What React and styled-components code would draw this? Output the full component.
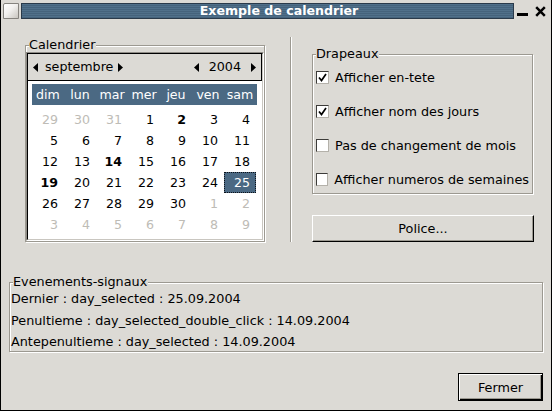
import React from "react";
import styled, { createGlobalStyle } from "styled-components";

const GlobalStyle = createGlobalStyle`
  html, body {
    margin: 0;
    padding: 0;
    background: #dcdad5;
  }
`;

const FONT = `"DejaVu Sans", "Liberation Sans", sans-serif`;

const DAY_NAMES = ["dim", "lun", "mar", "mer", "jeu", "ven", "sam"];

// o = other month, b = marked (bold), s = selected
const WEEKS = [
  [[29, "o"], [30, "o"], [31, "o"], [1], [2, "b"], [3], [4]],
  [[5], [6], [7], [8], [9], [10], [11]],
  [[12], [13], [14, "b"], [15], [16], [17], [18]],
  [[19, "b"], [20], [21], [22], [23], [24], [25, "s"]],
  [[26], [27], [28], [29], [30], [1, "o"], [2, "o"]],
  [[3, "o"], [4, "o"], [5, "o"], [6, "o"], [7, "o"], [8, "o"], [9, "o"]],
];

const FLAGS = [
  { label: "Afficher en-tete", checked: true },
  { label: "Afficher nom des jours", checked: true },
  { label: "Pas de changement de mois", checked: false },
  { label: "Afficher numeros de semaines", checked: false },
];

const EVENTS = [
  "Dernier : day_selected : 25.09.2004",
  "Penultieme : day_selected_double_click : 14.09.2004",
  "Antepenultieme : day_selected : 14.09.2004",
];

const Arrow = ({ dir }) => (
  <svg width="5" height="9" viewBox="0 0 5 9">
    <polygon points={dir === "left" ? "5,0 0,4.5 5,9" : "0,0 5,4.5 0,9"} fill="#000" />
  </svg>
);

const CheckMark = () => (
  <svg width="11" height="11" viewBox="0 0 11 11">
    <polyline points="2,5.5 4.5,8.5 9,2" fill="none" stroke="#000" strokeWidth="1.7" />
  </svg>
);

const App = () => {
  return (
    <>
      <GlobalStyle />
      <Window>
        <TitleBar>
          <CloseBox />
          <TitleStrip>Exemple de calendrier</TitleStrip>
          <WinControls>
            <svg width="11" height="12" viewBox="0 0 11 12">
              <rect x="0" y="7" width="11" height="3" fill="#000" />
            </svg>
            <svg width="11" height="11" viewBox="0 0 11 11">
              <path d="M1.2 1.2 L9.8 9.8 M9.8 1.2 L1.2 9.8" stroke="#000" strokeWidth="2.5" />
            </svg>
          </WinControls>
        </TitleBar>

        <Body>
          <TopRow>
            <Frame $width={240} $top={1}>
              <Legend>Calendrier</Legend>
              <Calendar>
                <CalendarInner>
                  <CalHeader>
                    <Spinner $gap={7} $gap2={5}>
                      <Arrow dir="left" />
                      <span>septembre</span>
                      <Arrow dir="right" />
                    </Spinner>
                    <Spinner $gap={10} $gap2={10}>
                      <Arrow dir="left" />
                      <span>2004</span>
                      <Arrow dir="right" />
                    </Spinner>
                  </CalHeader>
                  <CalBody>
                    <DayNames>
                      {DAY_NAMES.map((d) => (
                        <DayName key={d}>{d}</DayName>
                      ))}
                    </DayNames>
                    <DayGrid>
                      {WEEKS.flat().map(([n, kind], i) => (
                        <DayCell
                          key={i}
                          $other={kind === "o"}
                          $bold={kind === "b"}
                          $selected={kind === "s"}
                        >
                          {n}
                        </DayCell>
                      ))}
                    </DayGrid>
                  </CalBody>
                </CalendarInner>
              </Calendar>
            </Frame>

            <VSeparator />

            <RightCol>
              <Frame $width={221}>
                <Legend>Drapeaux</Legend>
                <FlagList>
                  {FLAGS.map((f) => (
                    <FlagRow key={f.label}>
                      <CheckBox>{f.checked && <CheckMark />}</CheckBox>
                      {f.label}
                    </FlagRow>
                  ))}
                </FlagList>
              </Frame>
              <PushButton $width={222} $height={27} $top={21}>
                Police...
              </PushButton>
            </RightCol>
          </TopRow>

          <Frame $width={534} $top={32}>
            <Legend>Evenements-signaux</Legend>
            <EventList>
              {EVENTS.map((e) => (
                <EventLine key={e}>{e}</EventLine>
              ))}
            </EventList>
          </Frame>

          <Footer>
            <PushButton $width={85} $height={28} $default>
              Fermer
            </PushButton>
          </Footer>
        </Body>
      </Window>
    </>
  );
};

// Styled Components

const Window = styled.div`
  width: 552px;
  height: 411px;
  box-sizing: border-box;
  border: 1px solid #000;
  border-top: 0;
  background: #dcdad5;
  display: flex;
  flex-direction: column;
  font-family: ${FONT};
  font-size: 12.8px;
  color: #000;
`;

const TitleBar = styled.div`
  height: 20px;
  box-sizing: border-box;
  padding: 3px 0 0 2px;
  display: flex;
  align-items: flex-start;
`;

const CloseBox = styled.div`
  width: 16px;
  height: 16px;
  box-sizing: border-box;
  border: 1px solid #85837e;
  border-radius: 2px 0 0 0;
  background: linear-gradient(135deg, #ffffff 0%, #f1f0ee 45%, #c9c6c0 100%);
`;

const TitleStrip = styled.div`
  margin-left: 2px;
  width: 493px;
  height: 16px;
  box-sizing: border-box;
  border: 1px solid #2a3a4a;
  padding-left: 23px;
  background: repeating-linear-gradient(
    to bottom,
    #50708a 0px,
    #50708a 1px,
    #45637c 1px,
    #45637c 2px
  );
  color: #fff;
  font-weight: bold;
  font-size: 12.6px;
  line-height: 14px;
  text-align: center;
  white-space: nowrap;
`;

const WinControls = styled.div`
  margin-left: 3px;
  display: flex;
  align-items: flex-start;
  gap: 7px;
  padding-top: 3px;

  & > svg:last-child {
    margin-top: 0;
  }
`;

const Body = styled.div`
  flex: 1;
  padding: 17px 8px 0 8px;
  display: flex;
  flex-direction: column;
`;

const TopRow = styled.div`
  display: flex;
  margin-left: 16px;
  height: 206px;
`;

const Frame = styled.fieldset`
  width: ${(p) => p.$width}px;
  box-sizing: border-box;
  margin: ${(p) => p.$top || 0}px 0 0 0;
  padding: 0;
  border: 1px solid #9c9991;
  box-shadow: inset 1px 1px 0 #fff, 1px 1px 0 #fff;
  min-width: 0;
  align-self: flex-start;
`;

const Legend = styled.legend`
  padding: 0 1px 0 0;
  margin-left: 3px;
  line-height: 14px;
  height: 14px;
  background: #dcdad5;
  font-size: 12.8px;
`;

const Calendar = styled.div`
  width: 238px;
  height: 189px;
  box-sizing: border-box;
  border: 1px solid;
  border-color: #8f8c86 #ffffff #ffffff #8f8c86;
  font-size: 12.6px;
`;

const CalendarInner = styled.div`
  height: 100%;
  box-sizing: border-box;
  border: 1px solid;
  border-color: #000 #c9c6c0 #c9c6c0 #000;
  background: #fff;
  display: flex;
  flex-direction: column;
`;

const CalHeader = styled.div`
  height: 27px;
  box-sizing: border-box;
  border-right: 1px solid #000;
  border-bottom: 1px solid #000;
  background: #dcdad5;
  display: flex;
  align-items: center;
  justify-content: space-between;
  padding: 0 5px;
  font-size: 12.7px;
`;

const Spinner = styled.div`
  display: flex;
  align-items: center;

  & > span {
    margin: 0 ${(p) => p.$gap2}px 0 ${(p) => p.$gap}px;
    line-height: 14px;
  }
`;

const CalBody = styled.div`
  padding: 3px 4px 4px 4px;
`;

const DayNames = styled.div`
  width: 225px;
  height: 21px;
  background: #4b6983;
  display: grid;
  grid-template-columns: repeat(7, 32px);
  align-items: center;
  color: #fff;
`;

const DayName = styled.div`
  text-align: center;
  line-height: 21px;
`;

const DayGrid = styled.div`
  margin-top: 4px;
  display: grid;
  grid-template-columns: repeat(7, 32px);
  grid-auto-rows: 21px;
`;

const DayCell = styled.div`
  box-sizing: border-box;
  text-align: right;
  padding-right: 6px;
  line-height: 21px;
  font-weight: ${(p) => (p.$bold ? "bold" : "normal")};
  color: ${(p) => (p.$other ? "#bebcb6" : p.$selected ? "#fff" : "#000")};
  background: ${(p) => (p.$selected ? "#4b6983" : "transparent")};
  outline: ${(p) => (p.$selected ? "1px dotted #0c1118" : "none")};
  outline-offset: -1px;
`;

const VSeparator = styled.div`
  margin-left: 25px;
  width: 2px;
  height: 205px;
  box-sizing: border-box;
  border-left: 1px solid #9c9991;
  border-right: 1px solid #fff;
`;

const RightCol = styled.div`
  margin-left: 20px;
  padding-top: 10px;
  display: flex;
  flex-direction: column;
`;

const FlagList = styled.div`
  padding: 6px 3px 4px 3px;
  display: flex;
  flex-direction: column;
  gap: 14px;
`;

const FlagRow = styled.div`
  height: 20px;
  display: flex;
  align-items: center;
  gap: 6px;
  white-space: nowrap;
`;

const CheckBox = styled.div`
  width: 13px;
  height: 13px;
  box-sizing: border-box;
  border: 1px solid;
  border-color: #3c3b39 #b4b1aa #b4b1aa #3c3b39;
  background: #fff;
  display: flex;
  align-items: center;
  justify-content: center;
`;

const PushButton = styled.button`
  width: ${(p) => p.$width}px;
  height: ${(p) => p.$height}px;
  margin-top: ${(p) => p.$top || 0}px;
  box-sizing: border-box;
  padding: 0;
  font-family: ${FONT};
  font-size: 12.8px;
  color: #000;
  background: #dcdad5;
  border: 1px solid;
  border-color: ${(p) => (p.$default ? "#000" : "#fff #000 #000 #fff")};
  box-shadow: ${(p) =>
    p.$default
      ? "inset 1px 1px 0 #fff, inset -1px -1px 0 #000, inset -2px -2px 0 #9c9991"
      : "inset -1px -1px 0 #9c9991"};
`;

const EventList = styled.div`
  padding: 1px 1px 0 1px;
  display: flex;
  flex-direction: column;
  gap: 3.7px;
`;

const EventLine = styled.div`
  line-height: 18px;
  height: 18px;
  white-space: nowrap;
`;

const Footer = styled.div`
  margin-top: 21px;
  display: flex;
  justify-content: flex-end;
`;

export default App;
